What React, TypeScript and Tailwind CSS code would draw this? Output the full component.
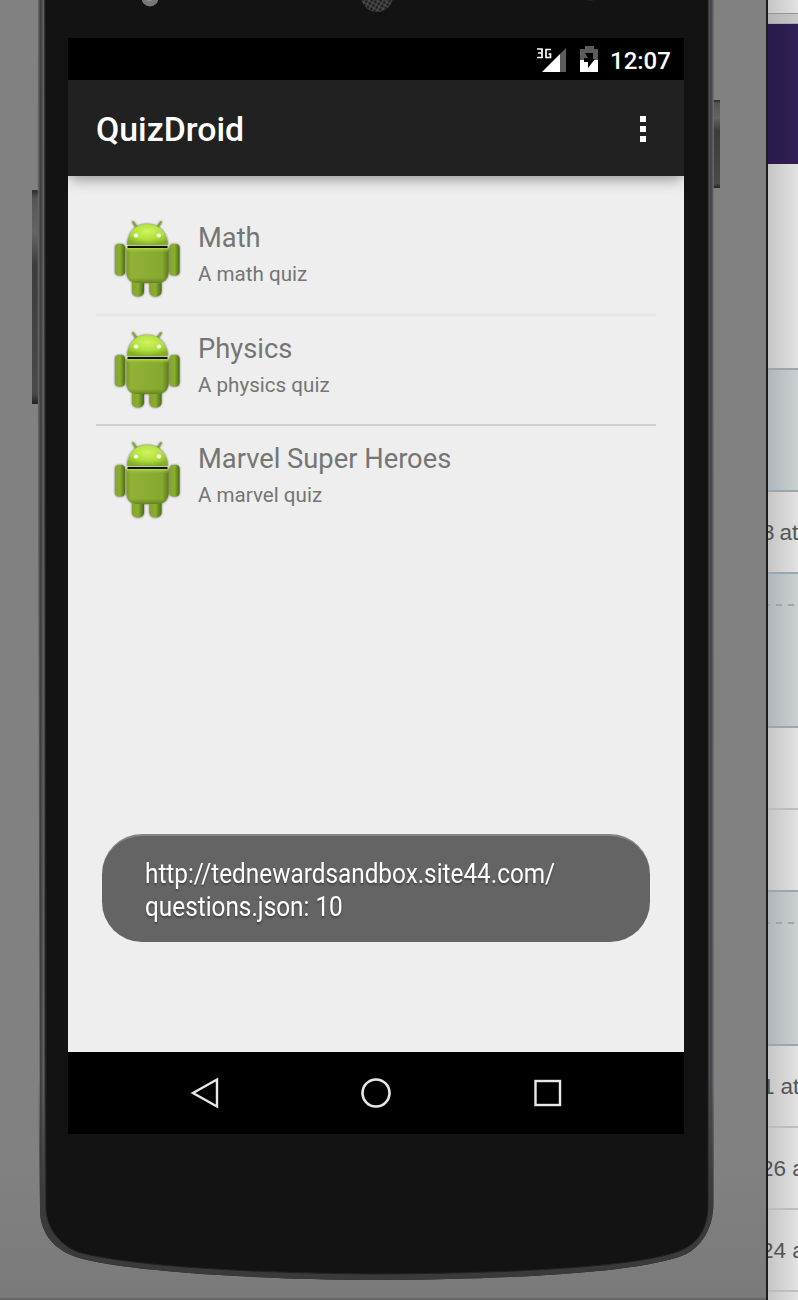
import React from "react";

const topics = [
  { title: "Math", description: "A math quiz" },
  { title: "Physics", description: "A physics quiz" },
  { title: "Marvel Super Heroes", description: "A marvel quiz" },
];

function DeviceFrame() {
  return (
    <svg className="absolute left-0 top-0" width="766" height="1300" viewBox="0 0 766 1300">
      <defs>
        <linearGradient id="edge" x1="38" x2="714" y1="0" y2="0" gradientUnits="userSpaceOnUse">
          <stop offset="0" stopColor="#6a6a6a" />
          <stop offset="0.004" stopColor="#3c3c3e" />
          <stop offset="0.008" stopColor="#606064" />
          <stop offset="0.012" stopColor="#222222" />
          <stop offset="0.986" stopColor="#222222" />
          <stop offset="0.991" stopColor="#505054" />
          <stop offset="0.996" stopColor="#46464a" />
          <stop offset="1" stopColor="#747474" />
        </linearGradient>
        <linearGradient id="fade" x1="0" x2="0" y1="1080" y2="1200" gradientUnits="userSpaceOnUse">
          <stop offset="0" stopColor="#3a3a3a" stopOpacity="0" />
          <stop offset="1" stopColor="#3a3a3a" stopOpacity="1" />
        </linearGradient>
        <linearGradient id="key" x1="0" x2="0" y1="0" y2="1">
          <stop offset="0" stopColor="#2c2c2c" />
          <stop offset="0.04" stopColor="#555555" />
          <stop offset="0.2" stopColor="#646464" />
          <stop offset="0.35" stopColor="#3c3c3c" />
          <stop offset="0.95" stopColor="#4a4a4a" />
          <stop offset="1" stopColor="#222222" />
        </linearGradient>
        <pattern id="mesh" width="4" height="4" patternUnits="userSpaceOnUse" patternTransform="rotate(30)">
          <rect width="4" height="4" fill="#4a4a4a" />
          <circle cx="2" cy="2" r="1.5" fill="#1c1c1c" />
        </pattern>
      </defs>
      <rect x="32" y="190" width="7" height="214" fill="url(#key)" />
      <rect x="713" y="100" width="7" height="88" fill="url(#key)" />
      <path d="M38 -2H714C713 400 715 800 713.500 1205C713 1228 702 1245 688 1253C660 1268 560 1279 376 1280C220 1279 110 1268 76 1257C56 1250 40 1235 40 1210C39 800 37 400 38 -2Z" fill="url(#edge)" />
      <path d="M38 1080H714L713.500 1205C713 1228 702 1245 688 1253C660 1268 560 1279 376 1280C220 1279 110 1268 76 1257C56 1250 40 1235 40 1210Z" fill="url(#fade)" />
      <path d="M45 -2H708V1205C708 1226 700 1241 684 1249C655 1263 560 1273 376 1274C220 1273 115 1263 78 1252C60 1245 46 1228 46 1207Z" fill="#131313" stroke="#222222" strokeWidth="1" />
      <circle cx="150" cy="-2" r="8.500" fill="#777777" />
      <circle cx="149" cy="-3" r="4" fill="#9a91a8" />
      <circle cx="377" cy="-4" r="16" fill="url(#mesh)" />
      <ellipse cx="590" cy="-1" rx="5" ry="2" fill="#202022" />
    </svg>
  );
}

function StatusBar() {
  return (
    <div className="flex h-[42px] items-start justify-end bg-black pr-[14px] text-white">
      <svg className="mt-2" width="62" height="28" viewBox="536 46 62 28">
        <g fill="none" stroke="#fff" strokeWidth="1.700">
          <path d="M537 49H542V57.500H537M538 53H542" />
          <path d="M551 49.500H546V57.500H550.500V54H548.500" />
        </g>
        <path d="M566 48V72H560V54Z" fill="#5c5c5c" />
        <path d="M560 54V72H542Z" fill="#fff" />
        <path d="M580 49H585V46H594V49H598V60H580Z" fill="#5c5c5c" />
        <path d="M580 60H598V72H580Z" fill="#fff" />
        <path d="M585 53H593V59H595L588 68V62H584V58H588Z" fill="#000" />
      </svg>
      <span className="ml-3 mt-[9px] w-[60px] text-[24px] font-medium leading-[28px]">12:07</span>
    </div>
  );
}

function AndroidIcon() {
  return (
    <svg width="70" height="82" viewBox="112 218 70 82" className="shrink-0">
      <defs>
        <radialGradient id="head" cx="0.500" cy="0.350" r="0.650">
          <stop offset="0" stopColor="#d0f45e" />
          <stop offset="0.600" stopColor="#aee03c" />
          <stop offset="1" stopColor="#86ad29" />
        </radialGradient>
        <linearGradient id="body" x1="0" x2="1" y1="0" y2="0">
          <stop offset="0" stopColor="#7da020" />
          <stop offset="0.120" stopColor="#91b236" />
          <stop offset="0.850" stopColor="#86a82e" />
          <stop offset="1" stopColor="#5f7e18" />
        </linearGradient>
        <linearGradient id="limb" x1="0" x2="1" y1="0" y2="0">
          <stop offset="0" stopColor="#82a52a" />
          <stop offset="0.500" stopColor="#8bae32" />
          <stop offset="1" stopColor="#4e6c11" />
        </linearGradient>
        <linearGradient id="shade" x1="0" x2="0" y1="0" y2="1">
          <stop offset="0" stopColor="#bce34f" stopOpacity="0.900" />
          <stop offset="0.130" stopColor="#91b832" stopOpacity="0" />
          <stop offset="0.850" stopColor="#61811a" stopOpacity="0" />
          <stop offset="1" stopColor="#587719" stopOpacity="0.800" />
        </linearGradient>
      </defs>
      <g className="drop-shadow-[0_0.5px_1px_rgba(0,0,0,0.6)]">
        <path d="M133 222L137 228M161 222L157 228" stroke="#83a82b" strokeWidth="2" strokeLinecap="round" />
        <rect x="132" y="277" width="12" height="19.500" rx="5" fill="url(#limb)" />
        <rect x="149.500" y="277" width="12" height="19.500" rx="5" fill="url(#limb)" />
        <rect x="115" y="244" width="10" height="31.500" rx="4" fill="url(#limb)" />
        <rect x="169.500" y="244" width="10" height="31.500" rx="4" fill="url(#limb)" />
        <path d="M127 245C128 231 136 224 147 224C158 224 167 231 168 245Z" fill="url(#head)" />
        <path d="M126.500 248H168.500V272C168.500 279 164 283 157 283H138C131 283 126.500 279 126.500 272Z" fill="url(#body)" />
        <path d="M126.500 248H168.500V272C168.500 279 164 283 157 283H138C131 283 126.500 279 126.500 272Z" fill="url(#shade)" />
      </g>
      <path d="M127.500 247H167.500" stroke="#101800" strokeWidth="2" />
      <circle cx="136" cy="235.500" r="2.100" fill="#fff" />
      <circle cx="159" cy="235.500" r="2.100" fill="#fff" />
    </svg>
  );
}

function TopicRow({ title, description }: { title: string; description: string }) {
  return (
    <div className="flex pl-4 pt-[13px] text-[#757575]">
      <AndroidIcon />
      <div className="pl-4 pt-1">
        <div className="whitespace-nowrap text-[27.300px] leading-8">{title}</div>
        <div className="mt-2 whitespace-nowrap text-[20.600px] leading-6">{description}</div>
      </div>
    </div>
  );
}

function Toast() {
  return (
    <div className="absolute left-[34px] top-[796px] h-[108px] w-[548px] rounded-[40px] border-t-2 border-[#858585] bg-[#646464] pl-[43px] pt-[22px] text-[27.400px] leading-[33px] text-white">
      <div className="w-max origin-left scale-x-[0.888] [text-shadow:0_2px_2px_rgba(0,0,0,0.3)]">
        http://tednewardsandbox.site44.com/
        <br />
        questions.json: 10
      </div>
    </div>
  );
}

function NavigationBar() {
  return (
    <div className="flex h-[82px] items-center justify-center gap-[131px] bg-black">
      <svg width="40" height="40" viewBox="0 0 40 40" fill="none" stroke="#e8e8e8" strokeWidth="2.400">
        <path d="M8 20L32 6.500V33.500Z" />
      </svg>
      <svg width="40" height="40" viewBox="0 0 40 40" fill="none" stroke="#e8e8e8" strokeWidth="2.600">
        <circle cx="20" cy="20" r="13.500" />
      </svg>
      <svg width="40" height="40" viewBox="0 0 40 40" fill="none" stroke="#e8e8e8" strokeWidth="2.400">
        <rect x="8.500" y="8" width="24.500" height="24" />
      </svg>
    </div>
  );
}

function PhoneScreen() {
  return (
    <div className="relative flex h-[1096px] w-[616px] flex-col overflow-hidden bg-[#eeeeee] font-[Roboto,sans-serif]">
      <StatusBar />
      <div className="flex h-24 items-center justify-between bg-[#212121] pl-7 pr-[38px] text-white shadow-[0_6px_12px_-2px_rgba(0,0,0,0.35)]">
        <h1 className="pt-1 text-[33.800px] font-medium leading-10">QuizDroid</h1>
        <div className="flex flex-col gap-1 pt-0.5">
          <span className="size-1.5 bg-white" />
          <span className="size-1.5 bg-white" />
          <span className="size-1.5 bg-white" />
        </div>
      </div>
      <div className="flex grow flex-col px-7 pt-[29px]">
        <div className="h-[109px]"><TopicRow {...topics[0]} /></div>
        <div className="h-[110px] border-t-2 border-[#e5e5e5]"><TopicRow {...topics[1]} /></div>
        <div className="h-[110px] border-t-2 border-[#cfcfcf]"><TopicRow {...topics[2]} /></div>
      </div>
      <Toast />
      <NavigationBar />
    </div>
  );
}

const white = "bg-linear-to-r from-[#c6c6c6] to-[#e2e2e2]";
const blue = "bg-linear-to-r from-[#b1b6ba] to-[#cbd0d3]";

function Row({ className, children }: { className: string; children?: React.ReactNode }) {
  return <div className={"flex shrink-0 items-center overflow-hidden whitespace-nowrap " + className}>{children}</div>;
}

function Dashes() {
  return (
    <div className="mb-[90px] h-0.5 w-full bg-[repeating-linear-gradient(90deg,#9fa5aa_0_2px,transparent_2px_8px,#9fa5aa_8px_12px)]" />
  );
}

function BackgroundPage() {
  return (
    <div className="flex h-[1300px] w-[30px] flex-col overflow-hidden font-['Liberation_Sans',sans-serif] text-[22.500px] text-[#555555]">
      <Row className={"h-[14px] border-b border-[#959595] " + white} />
      <Row className="h-[10px] border-b border-[#aaa] bg-linear-to-r from-[#b5b5b5] to-[#c9c9c9]" />
      <Row className="h-[140px] bg-linear-to-r from-[#281b4b] to-[#302057]" />
      <Row className={"h-[206px] border-b-2 border-[#9fa5aa] " + white} />
      <Row className={"h-[122px] border-b-2 border-[#9fa5aa] " + blue} />
      <Row className={"h-[82px] border-b-2 border-[#9fa5aa] pt-0.5 " + white}>
        <span className="-ml-[6px]">3</span>
        <span className="pl-[5px]">at</span>
      </Row>
      <Row className={"h-[154px] border-b-2 border-[#9fa5aa] " + blue}>
        <Dashes />
      </Row>
      <Row className={"h-[82px] border-b-2 border-[#bdbdbd] " + white} />
      <Row className={"h-[82px] border-b-2 border-[#9fa5aa] " + white} />
      <Row className={"h-[154px] border-b-2 border-[#9fa5aa] " + blue}>
        <Dashes />
      </Row>
      <Row className={"h-[82px] border-b-2 border-[#bdbdbd] pt-0.5 " + white}>
        <span className="-ml-[6px]">1</span>
        <span className="pl-[6px]">at</span>
      </Row>
      <Row className={"h-[82px] border-b-2 border-[#bdbdbd] pt-0.5 " + white}>
        <span className="-ml-[7px]">26 a</span>
      </Row>
      <Row className={"h-[82px] border-b-2 border-[#bdbdbd] pt-0.5 " + white}>
        <span className="-ml-[7px]">24 a</span>
      </Row>
      <Row className={"h-[8px] " + white} />
    </div>
  );
}

export default function App() {
  return (
    <div className="flex h-[1300px] w-[798px] overflow-hidden bg-[#808080]">
      <div className="relative h-[1300px] w-[766px] shrink-0 border-b-2 border-[#676767] bg-linear-to-b from-[#818181] from-90% to-[#7a7a7a] pl-[68px] pt-[38px]">
        <DeviceFrame />
        <PhoneScreen />
      </div>
      <div className="flex h-[1300px] w-8 shrink-0">
        <div className="w-0.5 shrink-0 bg-[#1c1c1c]" />
        <BackgroundPage />
      </div>
    </div>
  );
}
